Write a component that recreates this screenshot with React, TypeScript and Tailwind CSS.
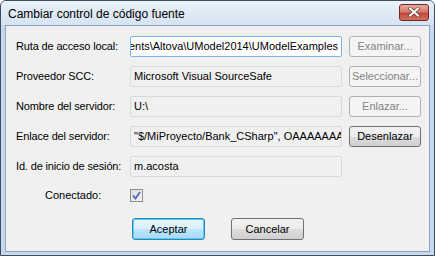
import React from "react";

const F = "font-['Liberation_Sans',Arial,sans-serif]";

function Field({ children, focused, alignEnd }: { children: React.ReactNode; focused?: boolean; alignEnd?: boolean }) {
  return (
    <div
      className={`w-[212px] h-[21px] shrink-0 flex items-center overflow-hidden whitespace-nowrap px-[3px] text-[11px] text-black ${
        alignEnd ? "justify-end" : "justify-start"
      } ${focused ? "bg-white border border-[#7eb4ea]" : "bg-[#f0f0f0] border border-[#d5dbe3]"} rounded-[2px]`}
    >
      <span className="shrink-0">{children}</span>
    </div>
  );
}

function SideButton({ label, disabled }: { label: string; disabled?: boolean }) {
  return (
    <div
      className={`w-[72px] h-[21px] shrink-0 flex items-center justify-center text-[11px] rounded-[3px] border ${
        disabled
          ? "border-[#adb2b5] bg-[#f4f4f4] text-[#838383]"
          : "border-[#707070] bg-[linear-gradient(#f2f2f2_0%,#ebebeb_50%,#dddddd_51%,#cfcfcf_100%)] text-black"
      }`}
    >
      {label}
    </div>
  );
}

function Row({ label, children, button }: { label: string; children: React.ReactNode; button?: React.ReactNode }) {
  return (
    <div className="flex items-center h-[21px]">
      <div className="w-[124px] shrink-0 pl-[10px] text-[11px] tracking-[-0.15px] text-black whitespace-nowrap">{label}</div>
      {children}
      {button ? <div className="ml-[7px] shrink-0">{button}</div> : null}
    </div>
  );
}

export default function App() {
  return (
    <div className={`w-[435px] h-[256px] ${F} bg-[#c6d8ec] border border-[#3b4d61] rounded-t-[6px] flex flex-col overflow-hidden`}>
      <div className="h-[24px] shrink-0 flex items-center justify-between pl-[7px] pr-[5px] bg-[linear-gradient(#eaf1f9,#d6e3f2)]">
        <span className="text-[12px] text-black leading-none mt-[2px]">Cambiar control de código fuente</span>
        <div className="w-[30px] h-[17px] mt-[-2px] rounded-[3px] border border-[#6b2a24] bg-[linear-gradient(#e9a99f_0%,#d57a6e_45%,#c2463a_55%,#d4735f_100%)] flex items-center justify-center">
          <svg width="12" height="10" viewBox="0 0 12 10">
            <path d="M2 1.5 L10 8.5 M10 1.5 L2 8.5" stroke="#5a3a36" strokeWidth="3.4" strokeLinecap="square" />
            <path d="M2 1.5 L10 8.5 M10 1.5 L2 8.5" stroke="#ffffff" strokeWidth="2" strokeLinecap="square" />
          </svg>
        </div>
      </div>
      <div className="flex-1 mx-[4px] mb-[3px] bg-[#f0f0f0] border border-[#8aa3bf] flex flex-col pt-[10px]">
        <div className="flex flex-col gap-[9px]">
          <Row label="Ruta de acceso local:" button={<SideButton label="Examinar..." disabled />}>
            <Field focused alignEnd>
              ents\Altova\UModel2014\UModelExamples
            </Field>
          </Row>
          <Row label="Proveedor SCC:" button={<SideButton label="Seleccionar..." disabled />}>
            <Field>Microsoft Visual SourceSafe</Field>
          </Row>
          <Row label="Nombre del servidor:" button={<SideButton label="Enlazar..." disabled />}>
            <Field>U:\</Field>
          </Row>
          <Row label="Enlace del servidor:" button={<SideButton label="Desenlazar" />}>
            <Field>"$/MiProyecto/Bank_CSharp", OAAAAAAAA</Field>
          </Row>
          <Row label="Id. de inicio de sesión:">
            <Field>m.acosta</Field>
          </Row>
        </div>
        <div className="flex items-center h-[13px] mt-[12px]">
          <div className="w-[124px] shrink-0 pl-[39px] text-[11px] text-black">Conectado:</div>
          <div className="w-[13px] h-[13px] shrink-0 border border-[#8f8f8f] bg-[linear-gradient(135deg,#dcdcdc,#f4f4f4)] flex items-center justify-center">
            <svg width="9" height="9" viewBox="0 0 9 9">
              <path d="M1 4.5 L3.5 7.5 L8 1" stroke="#4a67b8" strokeWidth="1.8" fill="none" />
            </svg>
          </div>
        </div>
        <div className="flex mt-[16px] pl-[126px] gap-[26px]">
          <div className="w-[73px] h-[22px] rounded-[3px] border border-[#3c7fb1] bg-[linear-gradient(#eaf6fd_0%,#d9f0fc_50%,#bee6fd_51%,#a7d9f5_100%)] shadow-[inset_0_0_0_1px_#48d4f7] flex items-center justify-center text-[11px] text-black">
            Aceptar
          </div>
          <div className="w-[73px] h-[22px] rounded-[3px] border border-[#707070] bg-[linear-gradient(#f2f2f2_0%,#ebebeb_50%,#dddddd_51%,#cfcfcf_100%)] flex items-center justify-center text-[11px] text-black">
            Cancelar
          </div>
        </div>
      </div>
    </div>
  );
}
